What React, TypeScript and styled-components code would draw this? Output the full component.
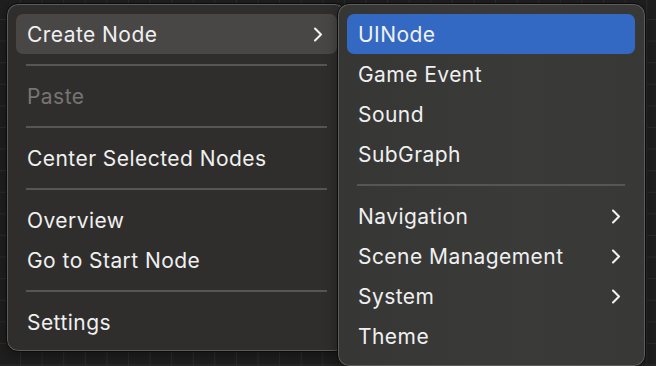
import React from "react";
import styled, { createGlobalStyle } from "styled-components";

const GlobalStyle = createGlobalStyle`
  html, body {
    margin: 0;
    padding: 0;
    background: #1f1f1f;
  }
  * {
    box-sizing: border-box;
  }
`;

type Entry =
  | { kind: "item"; label: string; submenu?: boolean; disabled?: boolean; active?: boolean }
  | { kind: "sep" };

const mainItems: Entry[] = [
  { kind: "item", label: "Create Node", submenu: true, active: true },
  { kind: "sep" },
  { kind: "item", label: "Paste", disabled: true },
  { kind: "sep" },
  { kind: "item", label: "Center Selected Nodes" },
  { kind: "sep" },
  { kind: "item", label: "Overview" },
  { kind: "item", label: "Go to Start Node" },
  { kind: "sep" },
  { kind: "item", label: "Settings" },
];

const nodeItems: Entry[] = [
  { kind: "item", label: "UINode", active: true },
  { kind: "item", label: "Game Event" },
  { kind: "item", label: "Sound" },
  { kind: "item", label: "SubGraph" },
  { kind: "sep" },
  { kind: "item", label: "Navigation", submenu: true },
  { kind: "item", label: "Scene Management", submenu: true },
  { kind: "item", label: "System", submenu: true },
  { kind: "item", label: "Theme" },
];

function Chevron() {
  return (
    <svg width="10" height="15" viewBox="0 0 10 15" fill="none">
      <path
        d="M2 1.5 L8 7.5 L2 13.5"
        stroke="#f2f2f2"
        strokeWidth="2.1"
        strokeLinecap="round"
        strokeLinejoin="round"
      />
    </svg>
  );
}

function MenuList({ entries, tone }: { entries: Entry[]; tone: "grey" | "blue" }) {
  return (
    <>
      {entries.map((e, i) =>
        e.kind === "sep" ? (
          <Separator key={i} />
        ) : (
          <Item key={i} $active={e.active ? tone : undefined} $disabled={e.disabled}>
            <span>{e.label}</span>
            {e.submenu && <Chevron />}
          </Item>
        )
      )}
    </>
  );
}

export default function App() {
  return (
    <>
      <GlobalStyle />
      <Canvas>
        <MainMenu>
          <MenuList entries={mainItems} tone="grey" />
        </MainMenu>
        <SubMenu>
          <MenuList entries={nodeItems} tone="blue" />
        </SubMenu>
      </Canvas>
    </>
  );
}

const Canvas = styled.div`
  width: 656px;
  height: 366px;
  overflow: hidden;
  display: flex;
  align-items: flex-start;
  padding: 3px 0 0 6px;
  background-color: #1f1f1f;
  background-image: linear-gradient(to right, #2c2c2c 1px, transparent 1px),
    linear-gradient(to bottom, #2c2c2c 1px, transparent 1px);
  background-size: 21.6px 21.6px;
  background-position: -1.6px -2.6px;
  font-family: Inter, "Noto Sans", "Liberation Sans", sans-serif;
`;

const MenuBox = styled.div`
  display: flex;
  flex-direction: column;
  border: 1px solid #0c0c0c;
  border-radius: 12px;
  box-shadow: inset 0 0 0 1px #5c5c5c, 0 4px 14px rgba(0, 0, 0, 0.35);
`;

const MainMenu = styled(MenuBox)`
  width: 341px;
  padding: 10px 9px 9px 9px;
  background: #2f2e2d;
`;

const SubMenu = styled(MenuBox)`
  width: 309px;
  margin-left: -10px;
  padding: 10px 10px 10px 9px;
  background: linear-gradient(to right, #363635, #3a3a39 60%, #383837);
  position: relative;
`;

const Item = styled.div<{ $active?: "grey" | "blue"; $disabled?: boolean }>`
  height: 40px;
  display: flex;
  align-items: center;
  justify-content: space-between;
  padding: 0 14px 0 11px;
  border-radius: 7px;
  font-size: 21px;
  letter-spacing: 0.45px;
  color: ${(p) => (p.$disabled ? "#767574" : "#f0f0f0")};
  background: ${(p) =>
    p.$active === "grey" ? "#484746" : p.$active === "blue" ? "#3369c2" : "transparent"};
  white-space: nowrap;
`;

const Separator = styled.div`
  height: 2px;
  margin: 10px 10px;
  background: #575655;
`;
